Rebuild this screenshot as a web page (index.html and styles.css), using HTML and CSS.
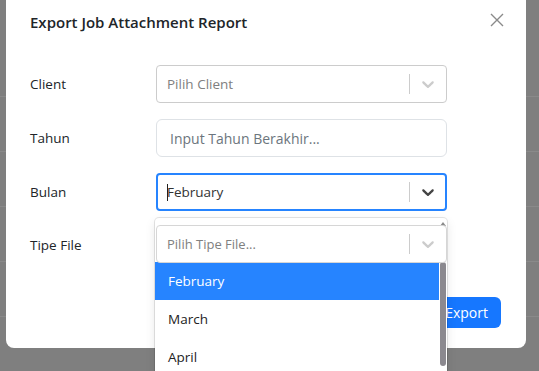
FILE: index.html
```html
<!DOCTYPE html>
<html lang="en">
<head>
    <meta charset="UTF-8">
    <meta name="viewport" content="width=device-width, initial-scale=1.0">
    <title>Export Job Attachment Report</title>
    <link rel="stylesheet" href="styles.css">
</head>
<body>
    <!-- dimmed page behind the modal -->
    <div class="page">
        <div class="page-row"></div>
        <div class="page-row"></div>
        <div class="page-row"></div>
        <div class="page-row"></div>
        <div class="page-row"></div>
        <div class="page-row"></div>
    </div>

    <div class="modal">
        <div class="modal-header">
            <h5 class="modal-title">Export Job Attachment Report</h5>
            <button class="btn-close" aria-label="Close">
                <svg width="14" height="14" viewBox="0 0 14 14"><path d="M1 1L13 13M13 1L1 13" stroke="#8a8a8a" stroke-width="1.4" fill="none"/></svg>
            </button>
        </div>

        <div class="modal-body">
            <div class="form-row">
                <label class="form-label">Client</label>
                <div class="select">
                    <div class="select-value placeholder">Pilih Client</div>
                    <span class="select-sep"></span>
                    <div class="select-arrow">
                        <svg width="20" height="20" viewBox="0 0 20 20"><path d="M4.516 7.548c0.436-0.446 1.043-0.481 1.576 0l3.908 3.747 3.908-3.747c0.533-0.481 1.141-0.446 1.574 0 0.436 0.445 0.408 1.197 0 1.615-0.406 0.418-4.695 4.502-4.695 4.502-0.217 0.223-0.502 0.335-0.787 0.335s-0.57-0.112-0.789-0.335c0 0-4.287-4.084-4.695-4.502s-0.436-1.17 0-1.615z"/></svg>
                    </div>
                </div>
            </div>

            <div class="form-row">
                <label class="form-label">Tahun</label>
                <input class="form-input" type="text" placeholder="Input Tahun Berakhir...">
            </div>

            <div class="form-row">
                <label class="form-label">Bulan</label>
                <div class="select-wrap">
                    <div class="select focused">
                        <div class="select-value"><span class="caret"></span>February</div>
                        <span class="select-sep"></span>
                        <div class="select-arrow">
                            <svg width="20" height="20" viewBox="0 0 20 20"><path d="M4.516 7.548c0.436-0.446 1.043-0.481 1.576 0l3.908 3.747 3.908-3.747c0.533-0.481 1.141-0.446 1.574 0 0.436 0.445 0.408 1.197 0 1.615-0.406 0.418-4.695 4.502-4.695 4.502-0.217 0.223-0.502 0.335-0.787 0.335s-0.57-0.112-0.789-0.335c0 0-4.287-4.084-4.695-4.502s-0.436-1.17 0-1.615z"/></svg>
                        </div>
                    </div>

                    <!-- open menu (first option sits under the next control) -->
                    <div class="select-menu">
                        <div class="menu-list">
                            <div class="menu-option selected">February</div>
                            <div class="menu-option">March</div>
                            <div class="menu-option">April</div>
                        </div>
                        <div class="menu-scrollbar">
                            <span class="scroll-up"></span>
                            <span class="scroll-thumb"></span>
                        </div>
                    </div>
                </div>
            </div>

            <div class="form-row">
                <label class="form-label">Tipe File</label>
                <div class="select small">
                    <div class="select-value placeholder">Pilih Tipe File...</div>
                    <span class="select-sep"></span>
                    <div class="select-arrow">
                        <svg width="20" height="20" viewBox="0 0 20 20"><path d="M4.516 7.548c0.436-0.446 1.043-0.481 1.576 0l3.908 3.747 3.908-3.747c0.533-0.481 1.141-0.446 1.574 0 0.436 0.445 0.408 1.197 0 1.615-0.406 0.418-4.695 4.502-4.695 4.502-0.217 0.223-0.502 0.335-0.787 0.335s-0.57-0.112-0.789-0.335c0 0-4.287-4.084-4.695-4.502s-0.436-1.17 0-1.615z"/></svg>
                    </div>
                </div>
            </div>
        </div>

        <div class="modal-footer">
            <button class="btn-export">Export</button>
        </div>
    </div>
</body>
</html>
```

FILE: styles.css
```css
* {
    box-sizing: border-box;
}

body {
    margin: 0;
    height: 100vh;
    overflow: hidden;
    background-color: #7f7f7f;
    font-family: "Open Sans", "Noto Sans", sans-serif;
    color: #212529;
}

/* page behind the backdrop */
.page {
    padding-top: 42px;
}

.page-row {
    height: 55px;
    border-bottom: 1px solid #8a8a8a;
}

.modal {
    position: absolute;
    left: 6px;
    top: -14px;
    width: 520px;
    height: 362px;
    background: #fff;
    border-radius: 8px;
    display: flex;
    flex-direction: column;
}

.modal-header {
    height: 72px;
    padding: 0 22px 0 24px;
    display: flex;
    align-items: center;
    justify-content: space-between;
}

.modal-title {
    margin: 0;
    font-size: 15px;
    font-weight: 600;
    color: #212529;
}

.btn-close {
    border: none;
    background: transparent;
    padding: 0;
    width: 14px;
    height: 14px;
    margin-top: -4px;
    cursor: pointer;
}

.modal-body {
    padding: 7px 24px 0;
    display: flex;
    flex-direction: column;
    gap: 16px;
}

.form-row {
    display: grid;
    grid-template-columns: 126px 291px;
    align-items: center;
}

.form-label {
    font-size: 13.5px;
    color: #212529;
}

/* react-select like control */
.select {
    height: 38px;
    border: 1px solid #cccccc;
    border-radius: 4px;
    background: #fff;
    display: flex;
    align-items: center;
    font-size: 13.5px;
}

.select-value {
    flex: 1;
    padding: 0 10px;
    color: #333;
    display: flex;
    align-items: center;
}

.select-value.placeholder {
    color: #808080;
}

.select.small .select-value {
    font-size: 13px;
}

.select-sep {
    width: 1px;
    height: 20px;
    background: #cccccc;
}

.select-arrow {
    width: 36px;
    display: flex;
    justify-content: center;
    fill: #cccccc;
}

.select.focused {
    border: 2px solid #2684ff;
    border-radius: 4px;
}

.select.focused .select-value {
    padding-left: 9px;
}

.select.focused .select-arrow {
    fill: #444;
    width: 35px;
}

.caret {
    display: inline-block;
    width: 1px;
    height: 17px;
    background: #222;
    margin-right: -1px;
}

.select-wrap {
    position: relative;
}

.select-menu {
    position: absolute;
    top: 45px;
    left: -1px;
    width: 292px;
    height: 170px;
    background: #fff;
    border-radius: 4px;
    box-shadow: 0 0 0 1px rgba(0, 0, 0, 0.1), 0 4px 11px rgba(0, 0, 0, 0.1);
    display: flex;
    padding-top: 44px;
    z-index: 1;
}

.menu-list {
    flex: 1;
}

.menu-option {
    height: 38px;
    padding: 0 13px;
    display: flex;
    align-items: center;
    font-size: 13.5px;
    color: #222;
}

.menu-option.selected {
    background: #2684ff;
    color: #fff;
}

.menu-scrollbar {
    width: 8px;
    position: relative;
    margin-top: -44px;
}

.scroll-up {
    position: absolute;
    top: 4px;
    left: 1px;
    border-left: 3px solid transparent;
    border-right: 3px solid transparent;
    border-bottom: 4px solid #8a8a8a;
}

.scroll-thumb {
    position: absolute;
    top: 44px;
    left: 1px;
    width: 6px;
    height: 104px;
    border-radius: 3px;
    background: #8b898f;
}

/* tipe file control sits above the open menu */
.form-row:last-child .select {
    position: relative;
    z-index: 2;
    margin-top: -2px;
    border-color: #d6d6d6;
}

.form-input {
    height: 38px;
    border: 1px solid #dee2e6;
    border-radius: 6px;
    padding: 0 13px;
    font-family: inherit;
    font-size: 14px;
    color: #212529;
}

.form-input::placeholder {
    color: #6c757d;
}

.modal-footer {
    margin-top: auto;
    padding: 0 25px 20px;
    display: flex;
    justify-content: flex-end;
}

.btn-export {
    height: 31px;
    padding: 0 13px;
    border: none;
    border-radius: 6px;
    background: #1677ff;
    color: #fff;
    font-family: inherit;
    font-size: 14px;
}
```
